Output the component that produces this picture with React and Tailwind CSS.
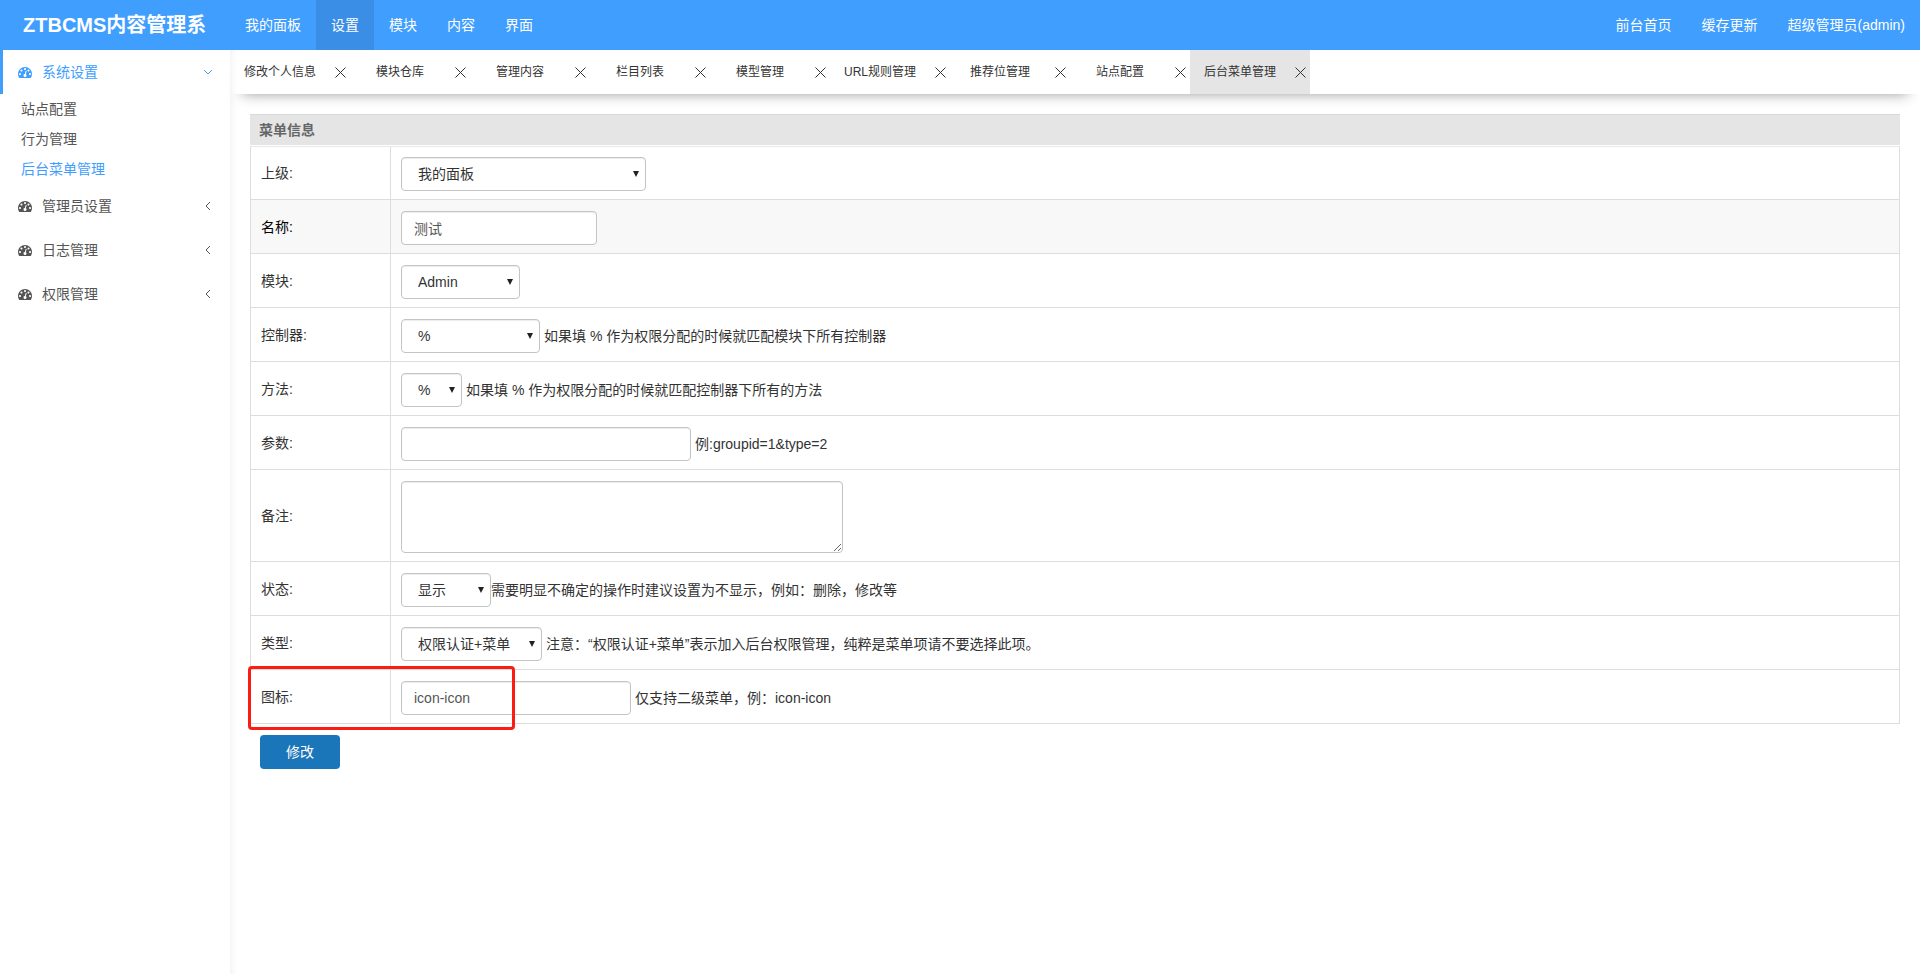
import { useState } from 'react';

const topMenus = ['我的面板', '设置', '模块', '内容', '界面'];
const userLinks = ['前台首页', '缓存更新', '超级管理员(admin)'];

const sideMenus = [
    { name: '系统设置', children: ['站点配置', '行为管理', '后台菜单管理'] },
    { name: '管理员设置' },
    { name: '日志管理' },
    { name: '权限管理' },
];

const openTabs = [
    '修改个人信息',
    '模块仓库',
    '管理内容',
    '栏目列表',
    '模型管理',
    'URL规则管理',
    '推荐位管理',
    '站点配置',
    '后台菜单管理',
];

const control = 'rounded border border-[#c4c4c4] bg-white shadow-[inset_0_1px_1px_rgba(0,0,0,0.075)] outline-none focus:border-[#66afe9]';

const DashboardIcon = () => (
    <svg width="14" height="14" viewBox="0 0 1792 1792" fill="currentColor">
        <path d="M384 1152q0-53-37.5-90.5t-90.5-37.5-90.5 37.5-37.5 90.5 37.5 90.5 90.5 37.5 90.5-37.5 37.5-90.5zm192-448q0-53-37.5-90.5t-90.5-37.5-90.5 37.5-37.5 90.5 37.5 90.5 90.5 37.5 90.5-37.5 37.5-90.5zm428 481l101-382q6-26-7.5-48.5t-38.5-29.5-48 6.5-30 39.5l-101 382q-60 5-107 43.5t-63 98.5q-20 77 20 146t117 89 146-20 89-117q16-60-6-117t-72-91zm660-33q0-53-37.5-90.5t-90.5-37.5-90.5 37.5-37.5 90.5 37.5 90.5 90.5 37.5 90.5-37.5 37.5-90.5zm-640-640q0-53-37.5-90.5t-90.5-37.5-90.5 37.5-37.5 90.5 37.5 90.5 90.5 37.5 90.5-37.5 37.5-90.5zm448 192q0-53-37.5-90.5t-90.5-37.5-90.5 37.5-37.5 90.5 37.5 90.5 90.5 37.5 90.5-37.5 37.5-90.5zm320 448q0 261-141 483-19 29-54 29h-1402q-35 0-54-29-141-221-141-483 0-182 71-348t191-286 286-191 348-71 348 71 286 191 191 286 71 348z" />
    </svg>
);

const Chevron = ({ open }) => (
    <svg width="10" height="10" viewBox="0 0 10 10" fill="none" stroke="currentColor" strokeWidth="1">
        <path d={open ? 'M1 3l4 4 4-4' : 'M7 1L3 5l4 4'} />
    </svg>
);

const CloseIcon = () => (
    <svg width="11" height="11" viewBox="0 0 11 11" fill="none" stroke="currentColor" strokeWidth="1">
        <path d="M0.5 0.5l10 10M10.5 0.5l-10 10" />
    </svg>
);

const Header = () => (
    <header className="flex h-[50px] items-stretch bg-[#409eff] text-white">
        <h1 className="flex w-[230px] shrink-0 items-center pl-[23px] text-xl font-bold whitespace-nowrap">
            ZTBCMS内容管理系
        </h1>
        <nav className="flex flex-1">
            {topMenus.map((name) => (
                <a
                    key={name}
                    href="#"
                    className={`flex items-center px-[15px] hover:bg-[#3a8ee6] ${name === '设置' ? 'bg-[#3a8ee6]' : ''}`}
                >
                    {name}
                </a>
            ))}
        </nav>
        <div className="flex">
            {userLinks.map((name) => (
                <a key={name} href="#" className="flex items-center px-[15px]">
                    {name}
                </a>
            ))}
        </div>
    </header>
);

const Sidebar = () => {
    const [opened, setOpened] = useState('系统设置');

    return (
        <aside className="w-[230px] shrink-0 bg-white text-[#555]">
            {sideMenus.map((menu) => {
                const isOpen = opened === menu.name;
                return (
                    <div key={menu.name}>
                        <button
                            type="button"
                            onClick={() => setOpened(isOpen ? '' : menu.name)}
                            className={`flex h-11 w-full items-center border-l-3 pr-[17px] pl-[15px] ${
                                isOpen ? 'border-[#409eff] text-[#409eff]' : 'border-transparent'
                            }`}
                        >
                            <DashboardIcon />
                            <span className="ml-[10px] flex-1 text-left">{menu.name}</span>
                            <Chevron open={isOpen} />
                        </button>
                        {isOpen && menu.children && (
                            <ul>
                                {menu.children.map((child) => (
                                    <li key={child}>
                                        <a
                                            href="#"
                                            className={`block pl-[21px] leading-[30px] ${
                                                child === '后台菜单管理' ? 'text-[#409eff]' : ''
                                            }`}
                                        >
                                            {child}
                                        </a>
                                    </li>
                                ))}
                            </ul>
                        )}
                    </div>
                );
            })}
        </aside>
    );
};

const TabBar = () => (
    <div className="flex h-11 text-xs shadow-[0_12px_14px_-12px_rgba(0,0,0,0.4)]">
        {openTabs.map((name) => (
            <div
                key={name}
                className={`flex w-[120px] items-center ${name === '后台菜单管理' ? 'bg-[#e5e5e5]' : ''}`}
            >
                <a href="#" className="w-[100px] text-center leading-[18px] whitespace-nowrap">
                    {name}
                </a>
                <button type="button" aria-label={`关闭${name}`} className="flex w-5 justify-center">
                    <CloseIcon />
                </button>
            </div>
        ))}
    </div>
);

const Row = ({ label, id, children, active, first }) => (
    <tr className={active ? 'bg-[#f8f8f8] text-black' : ''}>
        <th
            scope="row"
            className={`w-[141px] border-x border-b border-[#ddd] pl-[10px] text-left font-normal ${first ? 'border-t border-t-[#e8e8e8]' : ''}`}
        >
            <label htmlFor={id}>{label}:</label>
        </th>
        <td
            className={`border-r border-b border-[#ddd] pb-2 pl-[10px] text-[#333] ${first ? 'border-t border-t-[#e8e8e8] pt-[10px]' : 'pt-[11px]'}`}
        >
            <div className="flex items-center">{children}</div>
        </td>
    </tr>
);

const Select = ({ id, width, options }) => (
    <div className={`relative ${width}`}>
        <select id={id} className={`h-[34px] w-full appearance-none pl-4 ${control}`}>
            {options.map((option) => (
                <option key={option}>{option}</option>
            ))}
        </select>
        <svg className="pointer-events-none absolute top-[14px] right-[7px]" width="6" height="6" viewBox="0 0 6 6">
            <path d="M0 0h6L3 6z" fill="#222" />
        </svg>
    </div>
);

const Input = ({ id, width, value }) => (
    <input id={id} type="text" defaultValue={value} className={`h-[34px] px-3 text-[#555] ${width} ${control}`} />
);

const MenuForm = () => (
    <form onSubmit={(e) => e.preventDefault()} className="px-5 pt-5">
        <h2 className="mb-px h-[31px] border-t border-[#d9d9d9] bg-[#e5e5e5] pl-[9px] leading-[30px] font-bold text-[#666]">
            菜单信息
        </h2>
        <div className="relative">
            <table className="w-full border-separate border-spacing-0">
                <tbody>
                    <Row label="上级" id="parentid" first>
                        <Select id="parentid" width="w-[245px]" options={['我的面板', '设置', '模块', '内容', '界面']} />
                    </Row>
                    <Row label="名称" id="name" active>
                        <Input id="name" width="w-[196px]" value="测试" />
                    </Row>
                    <Row label="模块" id="app">
                        <Select id="app" width="w-[119px]" options={['Admin']} />
                    </Row>
                    <Row label="控制器" id="controller">
                        <Select id="controller" width="w-[139px]" options={['%']} />
                        <span className="ml-1">如果填 % 作为权限分配的时候就匹配模块下所有控制器</span>
                    </Row>
                    <Row label="方法" id="action">
                        <Select id="action" width="w-[61px]" options={['%']} />
                        <span className="ml-1">如果填 % 作为权限分配的时候就匹配控制器下所有的方法</span>
                    </Row>
                    <Row label="参数" id="parameter">
                        <Input id="parameter" width="w-[290px]" />
                        <span className="ml-1">例:groupid=1&amp;type=2</span>
                    </Row>
                    <Row label="备注" id="remark">
                        <textarea id="remark" className={`block h-[72px] w-[442px] px-3 py-1.5 ${control}`} />
                    </Row>
                    <Row label="状态" id="status">
                        <Select id="status" width="w-[90px]" options={['显示', '不显示']} />
                        <span>需要明显不确定的操作时建议设置为不显示，例如：删除，修改等</span>
                    </Row>
                    <Row label="类型" id="type">
                        <Select id="type" width="w-[141px]" options={['权限认证+菜单', '只作为菜单']} />
                        <span className="ml-1">注意：“权限认证+菜单”表示加入后台权限管理，纯粹是菜单项请不要选择此项。</span>
                    </Row>
                    <Row label="图标" id="icon">
                        <Input id="icon" width="w-[230px]" value="icon-icon" />
                        <span className="ml-1">仅支持二级菜单，例：icon-icon</span>
                    </Row>
                </tbody>
            </table>
            {/* highlight around the icon field */}
            <div className="pointer-events-none absolute -bottom-[6px] -left-[2px] h-16 w-[267px] rounded-sm border-3 border-[#fb1d14]" />
        </div>
        <button
            type="submit"
            className="mt-[11px] ml-[10px] h-[34px] w-20 rounded bg-[#1b75b9] text-white hover:bg-[#16639d]"
        >
            修改
        </button>
    </form>
);

const App = () => {
    return (
        <div className="flex min-h-screen flex-col bg-white font-['Liberation_Sans','Noto_Sans_CJK_SC',sans-serif] text-sm text-[#333]">
            <Header />
            <div className="flex flex-1">
                <Sidebar />
                <main className="min-w-0 flex-1 shadow-[inset_10px_0_10px_-10px_rgba(0,0,0,0.08)]">
                    <TabBar />
                    <MenuForm />
                </main>
            </div>
        </div>
    );
};

export default App;
